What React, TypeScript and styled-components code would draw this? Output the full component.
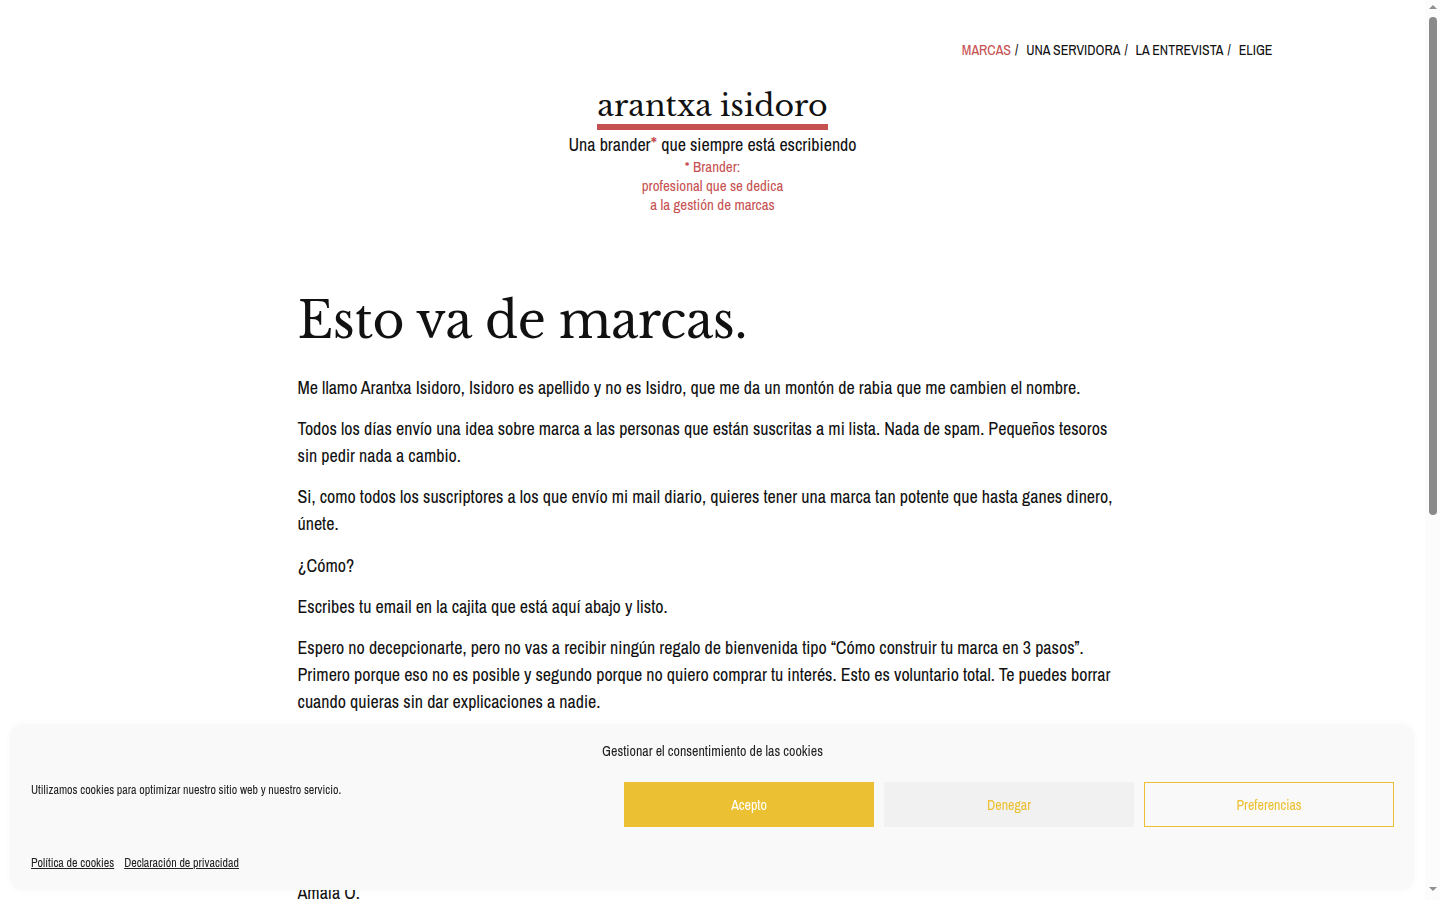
import React from "react";
import styled, { createGlobalStyle } from "styled-components";

const colors = {
  text: "#111111",
  red: "#c65151",
  yellow: "#ecc033",
  banner: "#f9f9f9",
  deny: "#f1f1f1",
  thumb: "#8a8a8a",
};

const sans = `"Liberation Sans Narrow", "Archivo Narrow", "DejaVu Sans Condensed", "Liberation Sans", sans-serif`;
const serif = `"Libre Baskerville", "DejaVu Serif", "Liberation Serif", serif`;

const GlobalStyle = createGlobalStyle`
  html, body {
    margin: 0;
    padding: 0;
    background: #ffffff;
  }
  body {
    font-family: ${sans};
    color: ${colors.text};
    -webkit-font-smoothing: antialiased;
  }
  * {
    box-sizing: border-box;
  }
`;

const Scrollbar = styled.div`
  position: fixed;
  top: 0;
  right: 0;
  bottom: 0;
  width: 15px;
  background: #fcfcfc;
  display: flex;
  flex-direction: column;
  align-items: center;
  z-index: 20;
`;

const Arrow = styled.div<{ down?: boolean }>`
  width: 0;
  height: 0;
  border-left: 4.5px solid transparent;
  border-right: 4.5px solid transparent;
  ${(p) =>
    p.down
      ? `border-top: 4px solid #8f8f8f; margin-top: auto; margin-bottom: 9px;`
      : `border-bottom: 4px solid #8f8f8f; margin-top: 5px;`}
`;

const Thumb = styled.div`
  width: 8px;
  height: 498px;
  margin-top: 8px;
  border-radius: 4px;
  background: ${colors.thumb};
`;

const Page = styled.div`
  margin-right: 15px;
`;

const Header = styled.header`
  max-width: 1140px;
  margin: 0 auto;
  padding: 40px 10px 0;
  display: flex;
  flex-direction: column;
  align-items: center;
`;

const Nav = styled.nav`
  align-self: flex-end;
  display: flex;
  gap: 4px;
  font-size: 14px;
  line-height: 20px;
  text-transform: uppercase;
`;

const NavItem = styled.a<{ active?: boolean }>`
  color: ${(p) => (p.active ? colors.red : colors.text)};
  text-decoration: none;
`;

const Slash = styled.span`
  margin-right: 4px;
`;

const Logo = styled.a`
  margin-top: 28px;
  font-family: ${serif};
  font-size: 30px;
  line-height: 36px;
  color: ${colors.text};
  text-decoration: none;
  border-bottom: 6px solid ${colors.red};
`;

const Tagline = styled.p`
  margin: 3px 0 0;
  font-size: 18px;
  line-height: 24px;
`;

const Star = styled.span`
  color: ${colors.red};
  font-size: 1.15em;
  line-height: 0;
`;

const Note = styled.p`
  margin: 0;
  color: ${colors.red};
  font-size: 15px;
  line-height: 19px;
  text-align: center;
`;

const Main = styled.main`
  max-width: 830px;
  margin: 0 auto;
  padding: 72px 0 200px;
`;

const Title = styled.h1`
  margin: 0 0 18px;
  font-family: ${serif};
  font-weight: 400;
  font-size: 49px;
  line-height: 70px;
  letter-spacing: -0.45px;
`;

const Paragraph = styled.p`
  margin: 0 0 14.2px;
  font-size: 18px;
  line-height: 27px;
`;

const Form = styled.form`
  display: flex;
  gap: 10px;
  margin: 36px 0 40px;
`;

const EmailInput = styled.input`
  flex: 1;
  height: 44px;
  border: 1px solid #cccccc;
  padding: 0 12px;
  font-family: ${sans};
  font-size: 16px;
`;

const SubmitButton = styled.button`
  height: 44px;
  padding: 0 28px;
  border: none;
  background: ${colors.red};
  color: #fff;
  font-family: ${sans};
  font-size: 16px;
`;

const Quote = styled.blockquote`
  margin: 0 0 17px;
  font-size: 18px;
  line-height: 27px;
  font-style: italic;
`;

const Banner = styled.div`
  position: fixed;
  left: 10px;
  right: 26px;
  bottom: 10px;
  height: 166px;
  background: ${colors.banner};
  border-radius: 12px;
  box-shadow: 0 0 8px rgba(0, 0, 0, 0.03);
  padding: 17px 20px 19px 21px;
  display: grid;
  grid-template-columns: 1fr 770px;
  grid-template-rows: auto 1fr auto;
  column-gap: 20px;
  z-index: 10;
`;

const BannerTitle = styled.div`
  grid-column: 1 / -1;
  text-align: center;
  font-size: 14px;
  line-height: 20px;
  color: #222;
`;

const BannerMessage = styled.div`
  align-self: start;
  margin-top: 21px;
  font-size: 12px;
  line-height: 16px;
  color: #222;
`;

const Buttons = styled.div`
  align-self: start;
  margin-top: 21px;
  display: grid;
  grid-template-columns: repeat(3, 250px);
  gap: 10px;
`;

const CookieButton = styled.button<{ variant: "accept" | "deny" | "prefs" }>`
  height: 45px;
  font-family: ${sans};
  font-size: 14px;
  cursor: pointer;
  background: ${(p) =>
    p.variant === "accept" ? colors.yellow : p.variant === "deny" ? colors.deny : "transparent"};
  color: ${(p) => (p.variant === "accept" ? "#ffffff" : colors.yellow)};
  border: 1px solid ${(p) => (p.variant === "deny" ? colors.deny : colors.yellow)};
`;

const Links = styled.div`
  grid-column: 1 / -1;
  display: flex;
  gap: 10px;
  font-size: 12px;
  line-height: 16px;
`;

const PolicyLink = styled.a`
  color: #222;
  text-decoration: underline;
`;

export default function App() {
  return (
    <>
      <GlobalStyle />
      <Page>
        <Header>
          <Nav>
            <NavItem href="#" active>
              Marcas
            </NavItem>
            <Slash>/</Slash>
            <NavItem href="#">Una servidora</NavItem>
            <Slash>/</Slash>
            <NavItem href="#">La entrevista</NavItem>
            <Slash>/</Slash>
            <NavItem href="#">Elige</NavItem>
          </Nav>
          <Logo href="#">arantxa isidoro</Logo>
          <Tagline>
            Una brander<Star>*</Star> que siempre está escribiendo
          </Tagline>
          <Note>
            * Brander:
            <br />
            profesional que se dedica
            <br />a la gestión de marcas
          </Note>
        </Header>
        <Main>
          <Title>Esto va de marcas.</Title>
          <Paragraph>
            Me llamo Arantxa Isidoro, Isidoro es apellido y no es Isidro, que me da un montón de
            rabia que me cambien el nombre.
          </Paragraph>
          <Paragraph>
            Todos los días envío una idea sobre marca a las personas que están suscritas a mi lista.
            Nada de spam. Pequeños tesoros sin pedir nada a cambio.
          </Paragraph>
          <Paragraph>
            Si, como todos los suscriptores a los que envío mi mail diario, quieres tener una marca
            tan potente que hasta ganes dinero, únete.
          </Paragraph>
          <Paragraph>¿Cómo?</Paragraph>
          <Paragraph>Escribes tu email en la cajita que está aquí abajo y listo.</Paragraph>
          <Paragraph>
            Espero no decepcionarte, pero no vas a recibir ningún regalo de bienvenida tipo “Cómo
            construir tu marca en 3 pasos”. Primero porque eso no es posible y segundo porque no
            quiero comprar tu interés. Esto es voluntario total. Te puedes borrar cuando quieras sin
            dar explicaciones a nadie.
          </Paragraph>
          <Form onSubmit={(e) => e.preventDefault()}>
            <EmailInput type="email" placeholder="Tu email" />
            <SubmitButton type="submit">Quiero suscribirme</SubmitButton>
          </Form>
          <Quote>“Tus correos son el mejor momento de mi mañana.”</Quote>
          <Paragraph>Amaia O.</Paragraph>
          <Paragraph>
            Cada día una idea nueva sobre marca, directa a tu bandeja de entrada.
          </Paragraph>
        </Main>
      </Page>
      <Banner>
        <BannerTitle>Gestionar el consentimiento de las cookies</BannerTitle>
        <BannerMessage>
          Utilizamos cookies para optimizar nuestro sitio web y nuestro servicio.
        </BannerMessage>
        <Buttons>
          <CookieButton variant="accept">Acepto</CookieButton>
          <CookieButton variant="deny">Denegar</CookieButton>
          <CookieButton variant="prefs">Preferencias</CookieButton>
        </Buttons>
        <Links>
          <PolicyLink href="#">Política de cookies</PolicyLink>
          <PolicyLink href="#">Declaración de privacidad</PolicyLink>
        </Links>
      </Banner>
      <Scrollbar>
        <Arrow />
        <Thumb />
        <Arrow down />
      </Scrollbar>
    </>
  );
}
